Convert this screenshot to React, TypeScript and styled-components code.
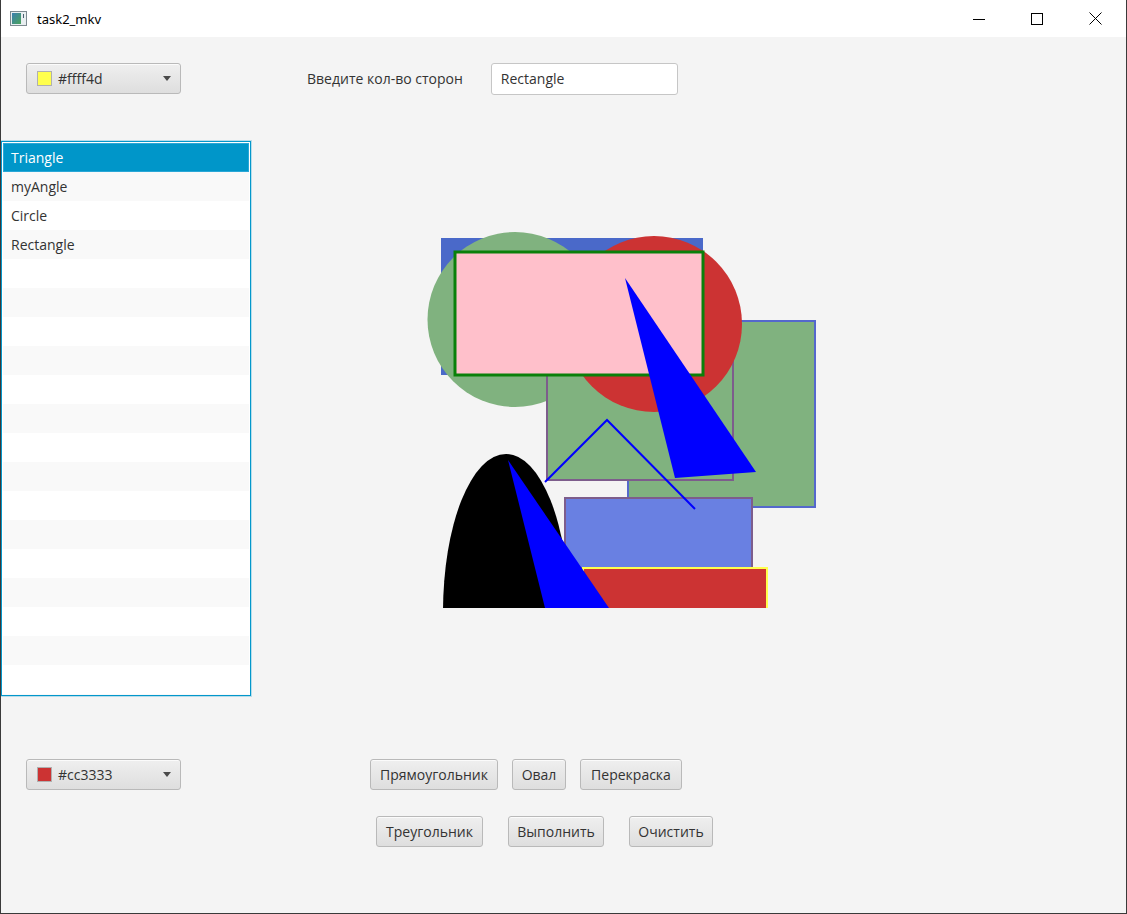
import React from "react";
import styled, { createGlobalStyle } from "styled-components";

const Global = createGlobalStyle`
  html, body { margin: 0; padding: 0; background: #ffffff; }
  * { box-sizing: border-box; }
`;

const FONT = `"Open Sans", "Noto Sans", "Liberation Sans", sans-serif`;

const Window = styled.div`
  width: 1127px;
  height: 914px;
  display: flex;
  flex-direction: column;
  border-left: 1px solid #3a3a3a;
  border-right: 1px solid #3a3a3a;
  border-bottom: 1px solid #3a3a3a;
  font-family: ${FONT};
  font-size: 14px;
  color: #333333;
  overflow: hidden;
`;

const TitleBar = styled.div`
  height: 37px;
  flex: none;
  background: #ffffff;
  display: flex;
  align-items: center;
  padding-left: 9px;
`;

const TitleText = styled.span`
  font-family: "Noto Sans", "Open Sans", sans-serif;
  font-size: 13px;
  color: #000000;
  margin-left: 10px;
`;

const Caption = styled.div`
  margin-left: auto;
  display: flex;
  height: 100%;
  padding-right: 2px;
`;

const CaptionButton = styled.div`
  width: 58px;
  height: 100%;
  display: flex;
  align-items: center;
  justify-content: center;
`;

const Content = styled.div`
  flex: 1;
  background: #f4f4f4;
  display: flex;
  flex-direction: column;
`;

const TopRow = styled.div`
  display: flex;
  align-items: center;
  padding-top: 26px;
  padding-left: 25px;
  height: 57px;
`;

const Picker = styled.div`
  width: 155px;
  height: 31px;
  display: flex;
  align-items: center;
  padding: 0 9px 0 10px;
  border: 1px solid #b9b9b9;
  border-radius: 3px;
  background: linear-gradient(#efefef, #dedede);
  box-shadow: inset 0 1px 0 #fbfbfb;
`;

const Swatch = styled.span<{ $color: string }>`
  width: 15px;
  height: 15px;
  background: ${(p) => p.$color};
  border: 1px solid #b0b0b0;
  margin-right: 6px;
  flex: none;
`;

const PickerText = styled.span`
  color: #333;
`;

const Arrow = styled.span`
  margin-left: auto;
  width: 0;
  height: 0;
  border-left: 4.5px solid transparent;
  border-right: 4.5px solid transparent;
  border-top: 5px solid #4a4a4a;
`;

const Label = styled.span`
  margin-left: 126px;
  color: #333;
`;

const TextField = styled.div`
  margin-left: 28px;
  width: 187px;
  height: 32px;
  background: #ffffff;
  border: 1px solid #c6c6c6;
  border-radius: 3px;
  display: flex;
  align-items: center;
  padding-left: 9px;
  color: #333;
`;

const MainRow = styled.div`
  display: flex;
  align-items: flex-start;
  margin-top: 47px;
`;

const List = styled.div`
  width: 250px;
  height: 555px;
  border: 1px solid #0397cb;
  box-shadow: 0 0 0 1px rgba(3, 151, 203, 0.25);
  background: #ffffff;
  padding: 1px;
  overflow: hidden;
  display: flex;
  flex-direction: column;
`;

const Row = styled.div<{ $odd: boolean; $selected?: boolean }>`
  height: 29px;
  flex: none;
  display: flex;
  align-items: center;
  padding-left: 8px;
  background: ${(p) => (p.$selected ? "#0096c9" : p.$odd ? "#f9f9f9" : "#ffffff")};
  color: ${(p) => (p.$selected ? "#ffffff" : "#333333")};
  box-shadow: ${(p) => (p.$selected ? "inset 0 0 0 1px #2aa7d6" : "none")};
`;

const Canvas = styled.svg`
  margin-left: 169px;
  margin-top: 87px;
  flex: none;
  display: block;
`;

const BottomArea = styled.div`
  display: flex;
  align-items: flex-start;
  margin-top: 63px;
  padding-left: 25px;
`;

const ButtonColumn = styled.div`
  margin-left: 189px;
  display: flex;
  flex-direction: column;
  gap: 26px;
`;

const ButtonRow = styled.div<{ $indent: number; $gap: number }>`
  display: flex;
  margin-left: ${(p) => p.$indent}px;
  gap: ${(p) => p.$gap}px;
`;

const Button = styled.button<{ $w: number }>`
  width: ${(p) => p.$w}px;
  height: 31px;
  padding: 0;
  font-family: ${FONT};
  font-size: 14px;
  color: #333;
  border: 1px solid #b9b9b9;
  border-radius: 3px;
  background: linear-gradient(#efefef, #dedede);
  box-shadow: inset 0 1px 0 #fbfbfb;
`;

const items = ["Triangle", "myAngle", "Circle", "Rectangle"];

const AppIcon = () => (
  <svg width="17" height="15" viewBox="0 0 17 15">
    <defs>
      <linearGradient id="ig" x1="0" y1="0" x2="1" y2="1">
        <stop offset="0" stopColor="#3b7fb0" />
        <stop offset="1" stopColor="#4aa35a" />
      </linearGradient>
    </defs>
    <rect x="0.5" y="0.5" width="16" height="14" fill="#e8eef0" stroke="#7d8a90" />
    <rect x="2" y="2" width="9" height="11" fill="url(#ig)" />
    <rect x="13" y="3" width="1" height="4" fill="#4a6070" />
  </svg>
);

export default function App() {
  return (
    <>
      <Global />
      <Window>
        <TitleBar>
          <AppIcon />
          <TitleText>task2_mkv</TitleText>
          <Caption>
            <CaptionButton>
              <svg width="12" height="12" viewBox="0 0 12 12">
                <line x1="0" y1="6.5" x2="12" y2="6.5" stroke="#000" strokeWidth="1" />
              </svg>
            </CaptionButton>
            <CaptionButton>
              <svg width="12" height="12" viewBox="0 0 12 12">
                <rect x="0.5" y="0.5" width="11" height="11" fill="none" stroke="#000" strokeWidth="1" />
              </svg>
            </CaptionButton>
            <CaptionButton>
              <svg width="13" height="13" viewBox="0 0 13 13">
                <path d="M0.5 0.5 L12.5 12.5 M12.5 0.5 L0.5 12.5" stroke="#000" strokeWidth="1" />
              </svg>
            </CaptionButton>
          </Caption>
        </TitleBar>
        <Content>
          <TopRow>
            <Picker>
              <Swatch $color="#ffff4d" />
              <PickerText>#ffff4d</PickerText>
              <Arrow />
            </Picker>
            <Label>Введите кол-во сторон</Label>
            <TextField>Rectangle</TextField>
          </TopRow>
          <MainRow>
            <List>
              {Array.from({ length: 20 }).map((_, i) => (
                <Row key={i} $odd={i % 2 === 1} $selected={i === 0}>
                  {items[i] ?? ""}
                </Row>
              ))}
            </List>
            <Canvas width="400" height="380" viewBox="420 228 400 380">
              <rect x="441" y="238" width="262" height="137" fill="#4a69c9" />
              <circle cx="515" cy="319.5" r="87.5" fill="#80b27f" />
              <rect x="628" y="321" width="187" height="186" fill="#80b27f" stroke="#5468cc" strokeWidth="2" />
              <rect x="547" y="300" width="186" height="180" fill="#80b27f" stroke="#7d5d8c" strokeWidth="2" />
              <circle cx="654" cy="324" r="88" fill="#cc3333" />
              <rect x="455" y="252" width="248" height="123" fill="#ffc0cb" stroke="#0a800a" strokeWidth="3" />
              <polygon points="625,278 675,478 756,472" fill="#0000ff" />
              <ellipse cx="506" cy="612" rx="63" ry="158" fill="#000000" />
              <rect x="565" y="498" width="187" height="70" fill="#6980e2" stroke="#7d5d8c" strokeWidth="2" />
              <polyline points="545,482 607,420 695,509" fill="none" stroke="#0000ff" strokeWidth="2" />
              <rect x="583" y="568" width="184" height="60" fill="#cc3333" stroke="#ffff4d" strokeWidth="2" />
              <polygon points="508,460 545,608 609,608" fill="#0000ff" />
            </Canvas>
          </MainRow>
          <BottomArea>
            <Picker>
              <Swatch $color="#cc3333" />
              <PickerText>#cc3333</PickerText>
              <Arrow />
            </Picker>
            <ButtonColumn>
              <ButtonRow $indent={0} $gap={14}>
                <Button $w={128}>Прямоугольник</Button>
                <Button $w={54}>Овал</Button>
                <Button $w={102}>Перекраска</Button>
              </ButtonRow>
              <ButtonRow $indent={6} $gap={25}>
                <Button $w={107}>Треугольник</Button>
                <Button $w={96}>Выполнить</Button>
                <Button $w={84}>Очистить</Button>
              </ButtonRow>
            </ButtonColumn>
          </BottomArea>
        </Content>
      </Window>
    </>
  );
}
